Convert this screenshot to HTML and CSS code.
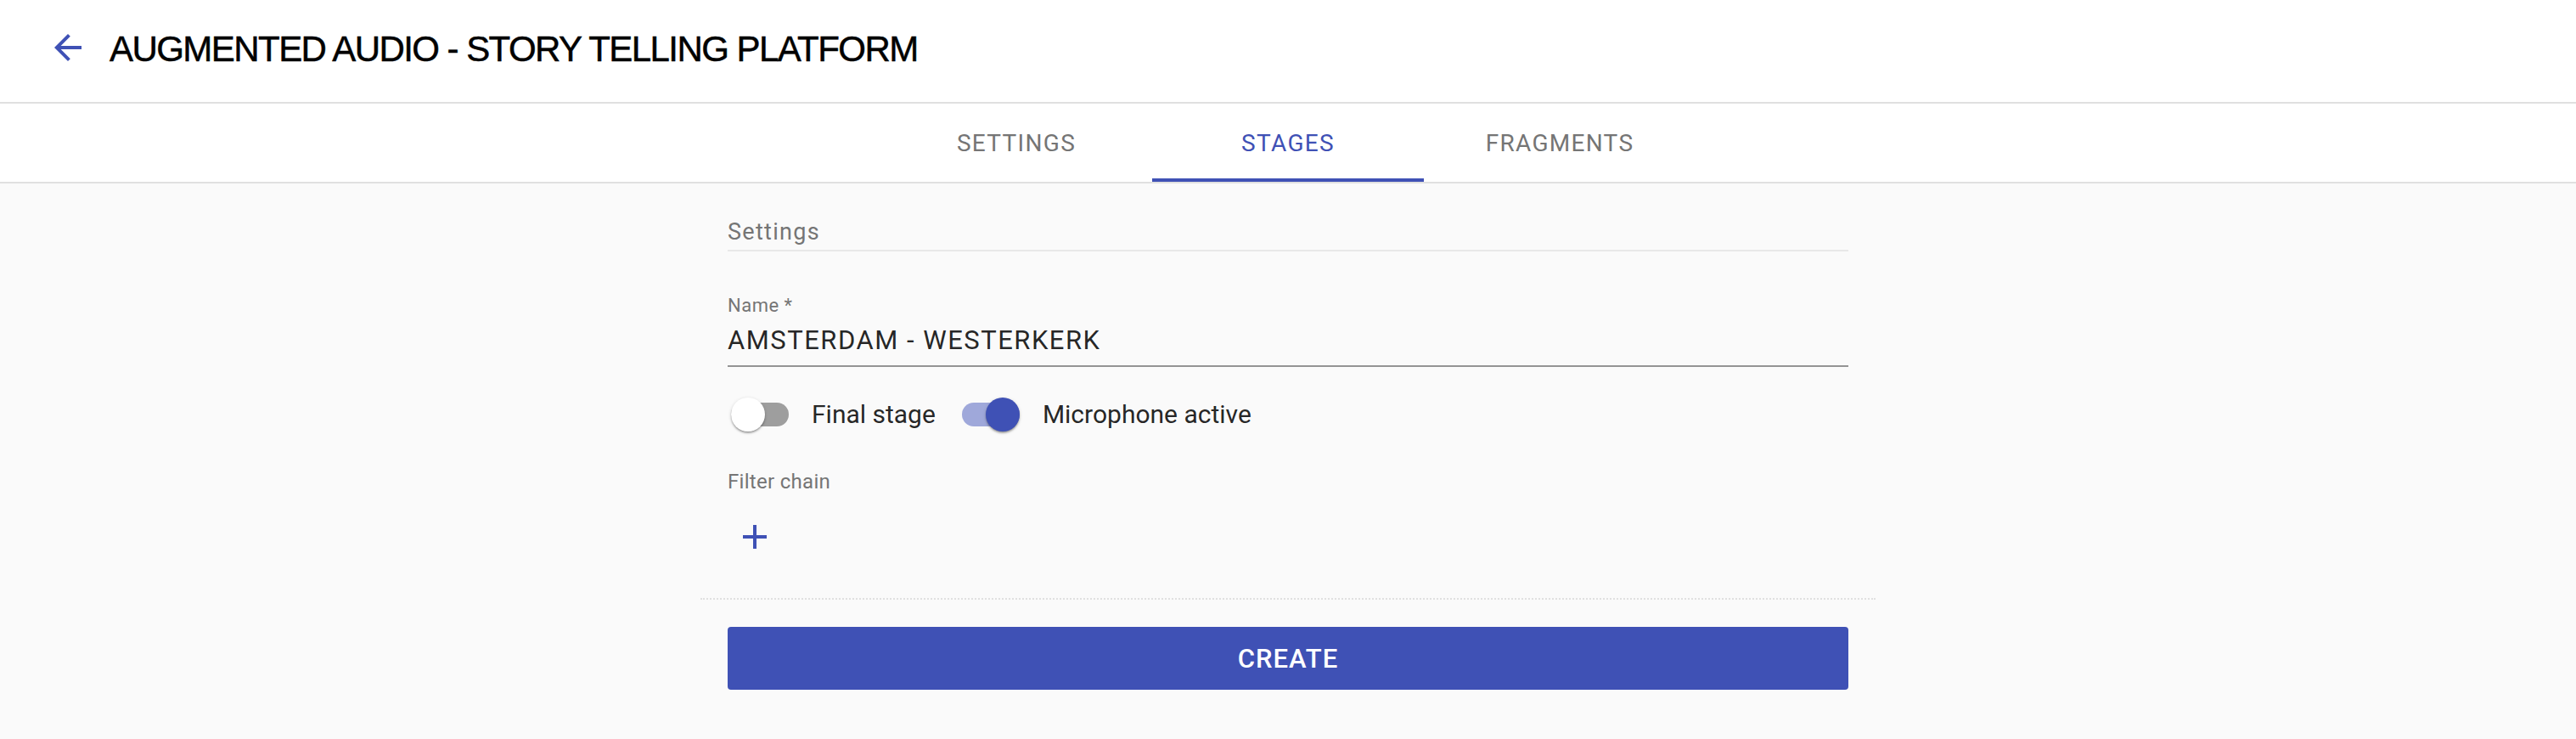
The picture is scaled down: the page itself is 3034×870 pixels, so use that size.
FILE: index.html
```html
<!DOCTYPE html>
<html lang="en">
<head>
<meta charset="utf-8">
<title>Augmented Audio - Story Telling Platform</title>
<link rel="stylesheet" href="styles.css">
</head>
<body>
<header class="appbar">
  <button class="back" aria-label="Back">
    <svg viewBox="0 0 24 24" width="48" height="48"><path d="M20 11H7.83l5.59-5.59L12 4l-8 8 8 8 1.41-1.41L7.83 13H20v-2z" fill="#3f51b5"/></svg>
  </button>
  <h1 class="title">AUGMENTED AUDIO - STORY TELLING PLATFORM</h1>
</header>
<nav class="tabs">
  <div class="tab">SETTINGS</div>
  <div class="tab active">STAGES</div>
  <div class="tab">FRAGMENTS</div>
</nav>
<main class="content">
  <section class="form">
    <div class="section-title">Settings</div>
    <div class="field">
      <label class="field-label">Name *</label>
      <div class="field-input">AMSTERDAM - WESTERKERK</div>
    </div>
    <div class="switch-row">
      <div class="control">
        <span class="switch"><span class="track"></span><span class="thumb"></span></span>
        <span class="control-label">Final stage</span>
      </div>
      <div class="control">
        <span class="switch on"><span class="track"></span><span class="thumb"></span></span>
        <span class="control-label">Microphone active</span>
      </div>
    </div>
    <div class="subtitle">Filter chain</div>
    <button class="add" aria-label="Add filter">
      <svg viewBox="0 0 24 24" width="48" height="48"><path d="M19 13h-6v6h-2v-6H5v-2h6V5h2v6h6v2z" fill="#3f51b5"/></svg>
    </button>
    <div class="divider"></div>
    <button class="create">CREATE</button>
  </section>
</main>
</body>
</html>
```
FILE: styles.css
```css
html, body {
  margin: 0;
  padding: 0;
}
body {
  background: #fafafa;
  font-family: Roboto, "Noto Sans", sans-serif;
  color: rgba(0, 0, 0, 0.87);
}
button {
  border: 0;
  background: none;
  padding: 0;
  margin: 0;
  cursor: pointer;
}
.appbar {
  height: 122px;
  box-sizing: border-box;
  padding: 0 0 4px 56px;
  background: #fff;
  border-bottom: 2px solid #e0e0e0;
  display: flex;
  align-items: center;
}
.back {
  width: 48px;
  height: 48px;
  display: block;
  margin-bottom: 4px;
}
.back svg { display: block; }
.title {
  margin: 0 0 0 25px;
  font-family: "Liberation Sans", Arial, sans-serif;
  font-weight: 400;
  font-size: 42px;
  line-height: 50px;
  letter-spacing: -1.55px;
  color: #000;
  -webkit-text-stroke: 0.5px #000;
}
.tabs {
  display: flex;
  justify-content: center;
  background: #fff;
  border-bottom: 2px solid #e0e0e0;
}
.tab {
  width: 320px;
  height: 92px;
  box-sizing: border-box;
  padding-top: 4px;
  border-bottom: 4px solid transparent;
  display: flex;
  align-items: center;
  justify-content: center;
  font-size: 28px;
  font-weight: 400;
  letter-spacing: 1.3px;
  color: #757575;
}
.tab.active {
  color: #3f51b5;
  border-bottom-color: #3f51b5;
}
.content {
  display: flex;
  justify-content: center;
}
.form {
  width: 1384px;
  box-sizing: border-box;
  padding: 39px 32px 58px;
  display: flex;
  flex-direction: column;
}
.section-title {
  font-size: 27px;
  line-height: 36px;
  letter-spacing: 1.3px;
  padding-bottom: 3px;
  color: #757575;
  border-bottom: 2px solid #e8e8e8;
}
.field {
  margin-top: 51px;
  display: flex;
  flex-direction: column;
}
.field-label {
  font-size: 22px;
  line-height: 26px;
  letter-spacing: 0.5px;
  color: #757575;
}
.field-input {
  margin-top: 8px;
  font-size: 31px;
  line-height: 40px;
  padding-bottom: 9px;
  color: rgba(0, 0, 0, 0.87);
  border-bottom: 2px solid #949494;
  letter-spacing: 1.5px;
}
.switch-row {
  margin-top: 28px;
  height: 56px;
  display: flex;
  align-items: center;
  padding-left: 4px;
}
.control {
  display: flex;
  align-items: center;
}
.control + .control {
  margin-left: 31px;
}
.switch {
  position: relative;
  width: 68px;
  height: 28px;
  display: block;
}
.track {
  display: block;
  width: 68px;
  height: 28px;
  border-radius: 14px;
  background: #9e9e9e;
}
.thumb {
  position: absolute;
  top: -6px;
  left: 0;
  width: 40px;
  height: 40px;
  border-radius: 50%;
  background: #fff;
  box-shadow: 0 2px 2px rgba(0,0,0,0.24), 0 1px 4px rgba(0,0,0,0.14), 0 2px 1px -1px rgba(0,0,0,0.12);
}
.switch.on .track {
  background: #9fa8da;
}
.switch.on .thumb {
  left: 28px;
  background: #3f51b5;
}
.control-label {
  margin-left: 27px;
  font-size: 30px;
  line-height: 40px;
  color: rgba(0, 0, 0, 0.87);
}
.subtitle {
  margin-top: 37px;
  font-size: 24px;
  line-height: 28px;
  letter-spacing: 0.3px;
  color: #757575;
}
.add {
  margin: 27px 0 0 8px;
  width: 48px;
  height: 48px;
  align-self: flex-start;
}
.add svg { display: block; }
.divider {
  margin: 48px -32px 0;
  border-top: 2px dotted #e0e0e0;
}
.create {
  margin-top: 32px;
  height: 74px;
  width: 100%;
  border-radius: 4px;
  background: #3f51b5;
  color: #fff;
  font-family: Roboto, "Noto Sans", sans-serif;
  font-size: 31px;
  font-weight: 500;
  letter-spacing: 1px;
}
```
